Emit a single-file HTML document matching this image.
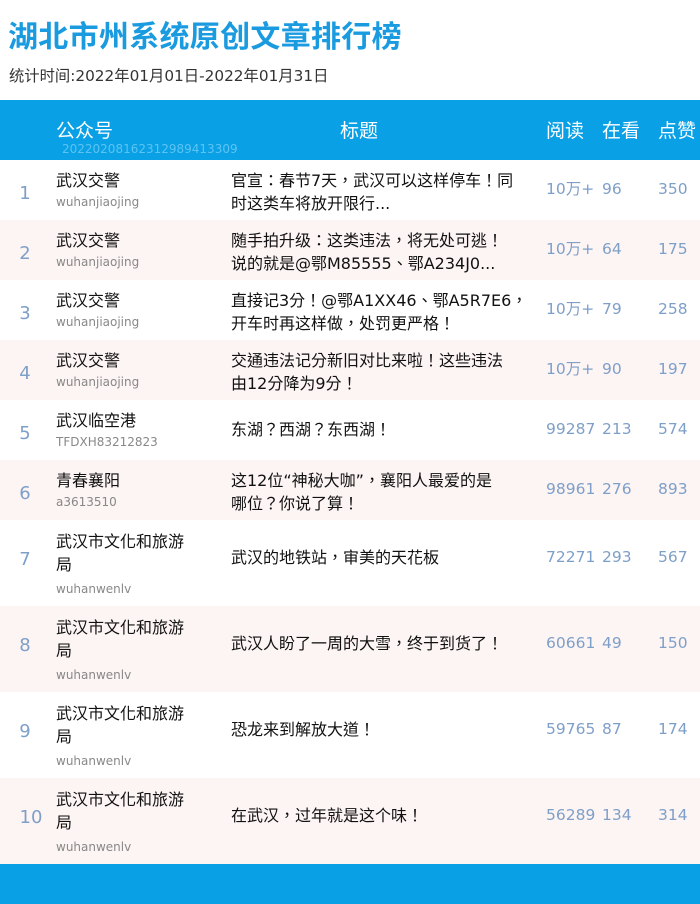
<!DOCTYPE html>
<html><head><meta charset="utf-8"><style>
*{margin:0;padding:0;box-sizing:border-box}
body{width:700px;height:904px;background:#fff;font-family:"DejaVu Sans","Noto Sans CJK TC",sans-serif;position:relative;overflow:hidden}
h1{position:absolute;left:8px;top:12px;font-size:30px;color:#1a9be0;font-weight:bold;letter-spacing:0.3px;font-family:"Noto Sans CJK SC",sans-serif;line-height:44px}
.sub{position:absolute;left:9px;top:64px;font-size:15.3px;color:#333}
.hd{position:absolute;left:0;top:100px;width:700px;height:60px;background:#0aa0e6;color:#fff}
.hd span{position:absolute;top:16px;font-size:19px;font-family:"Noto Sans CJK SC",sans-serif}
.hd .id{top:42px;font-size:12px;color:#5cc4f2;left:62px;font-family:"DejaVu Sans",sans-serif}
.row{position:absolute;left:0;width:700px}
.row.p{background:#fdf4f4}
.rk{position:absolute;left:0;width:50px;text-align:center;font-size:18px;color:#7e9fc8}
.nm{position:absolute;left:56px;font-size:16px;color:#111;line-height:23px;width:150px}
.ac{position:absolute;left:56px;font-size:12px;color:#888}
.tt{position:absolute;left:231px;font-size:16px;color:#111;line-height:23px;width:300px}
.n{position:absolute;font-size:15.5px;color:#7e9fc8;line-height:20px;height:20px;margin-top:-1px}
.ft{position:absolute;left:0;top:864px;width:700px;height:40px;background:#0aa0e6}
</style></head><body>
<h1>湖北市州系统原创文章排行榜</h1>
<div class="sub">统计时间:2022年01月01日-2022年01月31日</div>
<div class="hd"><span style="left:56px">公众号</span><span style="left:340px">标题</span><span style="left:546px">阅读</span><span style="left:602px">在看</span><span style="left:658px">点赞</span><span class="id">20220208162312989413309</span></div>

<div class="row" style="top:160px;height:60px"><div class="rk" style="top:23px">1</div><div class="nm" style="top:9px">武汉交警</div><div class="ac" style="top:35px">wuhanjiaojing</div><div class="tt" style="top:9px">官宣：春节7天，武汉可以这样停车！同<br>时这类车将放开限行...</div><div class="n" style="left:546px;top:20px">10万+</div><div class="n" style="left:602px;top:20px">96</div><div class="n" style="left:658px;top:20px">350</div></div>
<div class="row p" style="top:220px;height:60px"><div class="rk" style="top:23px">2</div><div class="nm" style="top:9px">武汉交警</div><div class="ac" style="top:35px">wuhanjiaojing</div><div class="tt" style="top:9px">随手拍升级：这类违法，将无处可逃！<br>说的就是@鄂M85555、鄂A234J0...</div><div class="n" style="left:546px;top:20px">10万+</div><div class="n" style="left:602px;top:20px">64</div><div class="n" style="left:658px;top:20px">175</div></div>
<div class="row" style="top:280px;height:60px"><div class="rk" style="top:23px">3</div><div class="nm" style="top:9px">武汉交警</div><div class="ac" style="top:35px">wuhanjiaojing</div><div class="tt" style="top:9px">直接记3分！@鄂A1XX46、鄂A5R7E6，<br>开车时再这样做，处罚更严格！</div><div class="n" style="left:546px;top:20px">10万+</div><div class="n" style="left:602px;top:20px">79</div><div class="n" style="left:658px;top:20px">258</div></div>
<div class="row p" style="top:340px;height:60px"><div class="rk" style="top:23px">4</div><div class="nm" style="top:9px">武汉交警</div><div class="ac" style="top:35px">wuhanjiaojing</div><div class="tt" style="top:9px">交通违法记分新旧对比来啦！这些违法<br>由12分降为9分！</div><div class="n" style="left:546px;top:20px">10万+</div><div class="n" style="left:602px;top:20px">90</div><div class="n" style="left:658px;top:20px">197</div></div>
<div class="row" style="top:400px;height:60px"><div class="rk" style="top:23px">5</div><div class="nm" style="top:9px">武汉临空港</div><div class="ac" style="top:35px">TFDXH83212823</div><div class="tt" style="top:18px">东湖？西湖？东西湖！</div><div class="n" style="left:546px;top:20px">99287</div><div class="n" style="left:602px;top:20px">213</div><div class="n" style="left:658px;top:20px">574</div></div>
<div class="row p" style="top:460px;height:60px"><div class="rk" style="top:23px">6</div><div class="nm" style="top:9px">青春襄阳</div><div class="ac" style="top:35px">a3613510</div><div class="tt" style="top:9px">这12位“神秘大咖”，襄阳人最爱的是<br>哪位？你说了算！</div><div class="n" style="left:546px;top:20px">98961</div><div class="n" style="left:602px;top:20px">276</div><div class="n" style="left:658px;top:20px">893</div></div>
<div class="row" style="top:520px;height:86px"><div class="rk" style="top:29px">7</div><div class="nm" style="top:10px">武汉市文化和旅游<br>局</div><div class="ac" style="top:62px">wuhanwenlv</div><div class="tt" style="top:26px">武汉的地铁站，审美的天花板</div><div class="n" style="left:546px;top:28px">72271</div><div class="n" style="left:602px;top:28px">293</div><div class="n" style="left:658px;top:28px">567</div></div>
<div class="row p" style="top:606px;height:86px"><div class="rk" style="top:29px">8</div><div class="nm" style="top:10px">武汉市文化和旅游<br>局</div><div class="ac" style="top:62px">wuhanwenlv</div><div class="tt" style="top:26px">武汉人盼了一周的大雪，终于到货了！</div><div class="n" style="left:546px;top:28px">60661</div><div class="n" style="left:602px;top:28px">49</div><div class="n" style="left:658px;top:28px">150</div></div>
<div class="row" style="top:692px;height:86px"><div class="rk" style="top:29px">9</div><div class="nm" style="top:10px">武汉市文化和旅游<br>局</div><div class="ac" style="top:62px">wuhanwenlv</div><div class="tt" style="top:26px">恐龙来到解放大道！</div><div class="n" style="left:546px;top:28px">59765</div><div class="n" style="left:602px;top:28px">87</div><div class="n" style="left:658px;top:28px">174</div></div>
<div class="row p" style="top:778px;height:86px"><div class="rk" style="top:29px;left:6px">10</div><div class="nm" style="top:10px">武汉市文化和旅游<br>局</div><div class="ac" style="top:62px">wuhanwenlv</div><div class="tt" style="top:26px">在武汉，过年就是这个味！</div><div class="n" style="left:546px;top:28px">56289</div><div class="n" style="left:602px;top:28px">134</div><div class="n" style="left:658px;top:28px">314</div></div>
<div class="ft"></div>
</body></html>
